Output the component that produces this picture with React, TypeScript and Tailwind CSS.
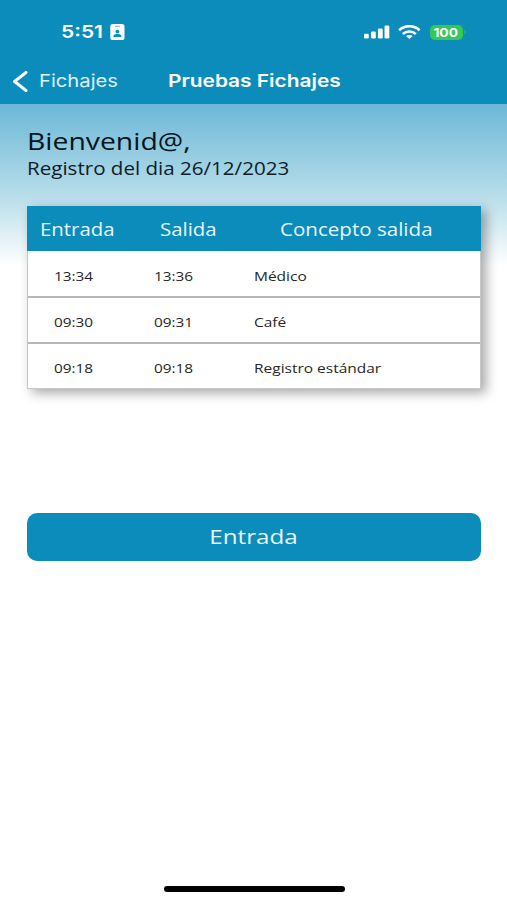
import type { ReactNode } from "react";
import { clsx } from "clsx";

const ENTRIES = [
  { entrada: "13:34", salida: "13:36", concepto: "Médico" },
  { entrada: "09:30", salida: "09:31", concepto: "Café" },
  { entrada: "09:18", salida: "09:18", concepto: "Registro estándar" },
];

// Wide lettering used across the whole app
function Wide({
  children,
  className,
}: {
  children: ReactNode;
  className?: string;
}) {
  return (
    <span className={clsx("inline-block whitespace-nowrap", className)}>
      {children}
    </span>
  );
}

function StatusBar() {
  return (
    <div className="flex h-[57px] items-center pt-[7px] pl-[61px] font-['Inter',sans-serif] text-white">
      <div className="w-[49px]">
        <Wide className="origin-left scale-x-[1.2] text-[17.5px] leading-5 font-semibold">
          5:51
        </Wide>
      </div>
      <svg width="15" height="16" viewBox="0 0 15 16" fill="none">
        <rect x="0.3" y="0" width="14.2" height="16" rx="2.6" fill="#fff" />
        <rect x="4.8" y="1.8" width="5.4" height="1" rx="0.5" fill="#6bb9d6" />
        <circle cx="7.4" cy="7.6" r="1.9" fill="#0c8cba" />
        <path
          d="M3.4 13v-.9c.5-1.6 1.9-2.1 4-2.1s3.600.5 4 2.100v.9z"
          fill="#0c8cba"
        />
      </svg>
      <svg
        className="ml-[239px]"
        width="26"
        height="14"
        viewBox="0 0 26 14"
        fill="#fff"
      >
        <rect x="0" y="8.8" width="4.8" height="4.8" rx="1.3" />
        <rect x="7" y="6.5" width="4.8" height="7.1" rx="1.3" />
        <rect x="13.9" y="3.6" width="4.8" height="10" rx="1.3" />
        <rect x="20.5" y="0.5" width="4.8" height="13.1" rx="1.3" />
      </svg>
      <svg
        className="ml-[8px]"
        width="23"
        height="14"
        viewBox="0 0 23 14"
        fill="none"
        stroke="#fff"
        strokeWidth="2.6"
      >
        <path d="M1.1 5.2C7-.1 15.7-.1 21.6 5.2" />
        <path d="M4.8 8.9c3.8-3.2 9.2-3.2 13.1 0" />
        <path
          d="M8 11c1.9-1.5 4.700-1.500 6.600 0l-3.300 2.900z"
          fill="#fff"
          stroke="none"
        />
      </svg>
      <div className="ml-[9px] flex h-[15px] w-[33px] items-center justify-center rounded-[5px] bg-[#35c759] pt-px pr-px">
        <Wide className="scale-x-[1.15] text-[12px] leading-none font-bold">
          100
        </Wide>
      </div>
      <div className="ml-px h-[4px] w-[2px] rounded-r-full bg-[#25a39a]" />
    </div>
  );
}

function NavBar() {
  return (
    <div className="flex h-[47px] items-center pt-px pl-[12px] font-['Inter',sans-serif] text-[17.5px] text-white">
      <svg width="16" height="21" viewBox="0 0 16 21" fill="none">
        <path
          d="M14 1.5 2.5 10.5 14 19.5"
          stroke="#fff"
          strokeWidth="2.9"
          strokeLinecap="round"
          strokeLinejoin="round"
        />
      </svg>
      <div className="ml-[11px] w-[128.5px]">
        <Wide className="origin-left scale-x-[1.155] text-[#dff3fa]">
          Fichajes
        </Wide>
      </div>
      <Wide className="origin-left scale-x-[1.193] font-semibold">
        Pruebas Fichajes
      </Wide>
    </div>
  );
}

export default function App() {
  return (
    <div className="flex h-[900px] w-[507px] flex-col overflow-hidden bg-white font-['Open_Sans',sans-serif]">
      <header className="h-[104px] shrink-0 bg-[#0c8cba]">
        <StatusBar />
        <NavBar />
      </header>

      <main className="flex-1 bg-[linear-gradient(to_bottom,#6cb8d7_0px,#bcdfeb_96px,#ffffff_162px)] px-[26.5px] pt-[21px]">
        <h1 className="h-[32px] text-[24.5px] leading-[32px] text-[#07161d]">
          <Wide className="origin-left scale-x-[1.157]">Bienvenid@,</Wide>
        </h1>
        <p className="h-[24px] text-[17.5px] leading-[23px] text-[#0d2029]">
          <Wide className="origin-left scale-x-[1.175]">
            Registro del dia 26/12/2023
          </Wide>
        </p>

        <section className="mt-[25px] shadow-[5px_4px_11px_rgba(0,0,0,0.35)]">
          <div className="flex h-[45px] items-center bg-[#0c8cba] pt-px pl-[13px] text-[17.5px] text-[#e6f6fc]">
            <div className="w-[120px]">
              <Wide className="origin-left scale-x-[1.165]">Entrada</Wide>
            </div>
            <div className="w-[120px]">
              <Wide className="origin-left scale-x-[1.165]">Salida</Wide>
            </div>
            <Wide className="origin-left scale-x-[1.175]">Concepto salida</Wide>
          </div>
          <div className="border-x border-b border-[#c8c8c8] bg-white">
            {ENTRIES.map((entry, i) => (
              <div
                key={i}
                className={clsx(
                  "flex items-center pl-[26px] text-[13px] text-[#262626]",
                  i === 0
                    ? "h-[45px] pt-[6px]"
                    : "h-[46px] border-t-2 border-[#b8b8b8] pt-[5px]",
                )}
              >
                <div className="w-[100px]">
                  <Wide className="origin-left scale-x-[1.18]">
                    {entry.entrada}
                  </Wide>
                </div>
                <div className="w-[100px]">
                  <Wide className="origin-left scale-x-[1.18]">
                    {entry.salida}
                  </Wide>
                </div>
                <Wide className="origin-left scale-x-[1.19]">
                  {entry.concepto}
                </Wide>
              </div>
            ))}
          </div>
        </section>

        <button className="mt-[123.5px] flex h-[48px] w-full items-center justify-center rounded-[10px] bg-[#0c8cba] text-[20.5px] text-[#e6f6fc]">
          <Wide className="scale-x-[1.18]">Entrada</Wide>
        </button>
      </main>

      {/* Home indicator */}
      <div className="flex h-[14px] shrink-0 justify-center pl-px">
        <div className="h-[6px] w-[181px] rounded-full bg-black" />
      </div>
    </div>
  );
}
